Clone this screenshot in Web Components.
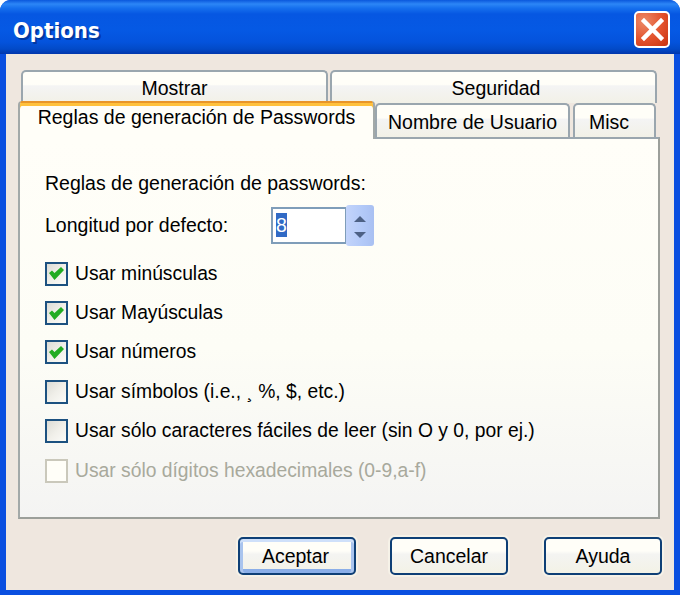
<!DOCTYPE html>
<html>
<head>
<meta charset="utf-8">
<title>Options</title>
<style>
    html, body { margin: 0; padding: 0; background: #fff; }
    body { font-family: "Liberation Sans", Arial, sans-serif; font-size: 19.5px; color: #000; }
</style>
</head>
<body>
<xp-window heading="Options">
    <xp-tabs>
        <xp-tab slot="top" style="width:307px">Mostrar</xp-tab>
        <xp-tab slot="top" style="width:327px;padding-left:5px">Seguridad</xp-tab>
        <xp-tab slot="bottom" active style="width:357px">Reglas de generación de Passwords</xp-tab>
        <xp-tab slot="bottom" style="width:195px;margin-right:3px">Nombre de Usuario</xp-tab>
        <xp-tab slot="bottom" style="width:83px;padding-right:11px">Misc</xp-tab>

        <div style="height:34px;display:flex;align-items:center">Reglas de generación de passwords:</div>
        <xp-spinner value="8">Longitud por defecto:</xp-spinner>
        <xp-checkbox checked>Usar minúsculas</xp-checkbox>
        <xp-checkbox checked>Usar Mayúsculas</xp-checkbox>
        <xp-checkbox checked>Usar números</xp-checkbox>
        <xp-checkbox>Usar símbolos (i.e., ¸ %, $, etc.)</xp-checkbox>
        <xp-checkbox>Usar sólo caracteres fáciles de leer (sin O y 0, por ej.)</xp-checkbox>
        <xp-checkbox disabled>Usar sólo dígitos hexadecimales (0-9,a-f)</xp-checkbox>
    </xp-tabs>
    <xp-button slot="actions" default style="margin-right:34px;padding-right:3px">Aceptar</xp-button>
    <xp-button slot="actions" style="margin-right:36px">Cancelar</xp-button>
    <xp-button slot="actions">Ayuda</xp-button>
</xp-window>

<script>
class XpWindow extends HTMLElement {
    constructor() {
        super()
        this.attachShadow({ mode: "open" })
        this.shadowRoot.innerHTML = `
            <style>
                :host {
                    display: flex;
                    flex-direction: column;
                    width: 680px;
                    height: 595px;
                    box-sizing: border-box;
                    overflow: hidden;
                    border-radius: 11px 11px 0 0;
                    background: #0a4fe0;
                }
                .title {
                    height: 54px;
                    flex: none;
                    box-sizing: border-box;
                    display: flex;
                    align-items: center;
                    justify-content: space-between;
                    padding: 4px 10px 0 13px;
                    background: linear-gradient(#0a58dc 0, #2c86f6 4px, #1670ee 8px, #0657e2 14px, #0559e4 30px, #0453dc 42px, #024ac8 49px, #0136ac 54px);
                }
                h1 {
                    margin: 2px 0 0;
                    font: bold 22px "DejaVu Sans Condensed", "DejaVu Sans", sans-serif;
                    color: #fff;
                    text-shadow: 2px 2px 0 #0238a0;
                }
                .close {
                    width: 36px;
                    height: 37px;
                    box-sizing: border-box;
                    border: 2px solid #fff;
                    border-radius: 5px;
                    background: radial-gradient(circle at 25% 25%, #ec8a68, #e2512c 55%, #c8330f);
                    display: flex;
                    align-items: center;
                    justify-content: center;
                }
                .frame {
                    flex: 1;
                    display: flex;
                    flex-direction: column;
                    margin: 0 6px 5px 6px;
                    background: #efe7df;
                    padding: 16px 0 0 12px;
                }
                .actions {
                    display: flex;
                    margin: 18px 12px 0 0;
                    justify-content: flex-end;
                }
            </style>
            <div class="title">
                <h1></h1>
                <div class="close">
                    <svg width="27" height="27" viewBox="0 0 27 27">
                        <path d="M5 5 L22 22 M22 5 L5 22" stroke="#fff" stroke-width="4.5" fill="none" stroke-linecap="square"/>
                    </svg>
                </div>
            </div>
            <div class="frame">
                <slot></slot>
                <div class="actions"><slot name="actions"></slot></div>
            </div>
        `
    }

    connectedCallback() {
        this.shadowRoot.querySelector("h1").textContent = this.getAttribute("heading")
    }
}

class XpTabs extends HTMLElement {
    constructor() {
        super()
        this.attachShadow({ mode: "open" })
        this.shadowRoot.innerHTML = `
            <style>
                :host { display: block; width: 642px; }
                .row { display: flex; }
                .top { padding-left: 3px; height: 33px; gap: 2px; }
                .bottom { height: 34px; align-items: flex-end; }
                .panel {
                    height: 382px;
                    box-sizing: border-box;
                    display: block;
                    padding: 27px 0 0 25px;
                    border: 2px solid #9c9f9a;
                    border-top-color: #9aa6ae;
                    border-left-color: #a3a9a8;
                    background: linear-gradient(#fffef8 0, #fdfdf6 55%, #f4f4f3 100%);
                }
            </style>
            <div class="row top"><slot name="top"></slot></div>
            <div class="row bottom"><slot name="bottom"></slot></div>
            <div class="panel"><slot></slot></div>
        `
    }
}

class XpTab extends HTMLElement {
    constructor() {
        super()
        this.attachShadow({ mode: "open" })
        this.shadowRoot.innerHTML = `
            <style>
                :host {
                    display: flex;
                    align-items: center;
                    justify-content: center;
                    box-sizing: border-box;
                    height: 34px;
                    padding-top: 2px;
                    border: 2px solid #9aa6ae;
                    border-bottom: 0;
                    border-radius: 5px 5px 0 0;
                    background: linear-gradient(#fffef8 0, #fffef8 40%, #f4f4f4 45%, #f2f1e7 100%);
                }
                :host([slot="top"]) { height: 33px; }
                :host([active]) {
                    position: relative;
                    z-index: 1;
                    height: 38px;
                    margin-bottom: -2px;
                    margin-top: -4px;
                    padding: 0 0 6px;
                    border: 2px solid #a3a9a8;
                    border-top: 0;
                    border-bottom: 0;
                    background: #fffef8;
                    box-shadow: inset 0 5px 0 #ffc13c;
                    border-radius: 4px 4px 0 0;
                    overflow: hidden;
                }
                :host([active])::before {
                    content: "";
                    position: absolute;
                    left: -2px; right: -2px; top: 0;
                    height: 2px;
                    background: #e8952a;
                }
            </style>
            <slot></slot>
        `
    }
}

class XpCheckbox extends HTMLElement {
    constructor() {
        super()
        this.attachShadow({ mode: "open" })
        this.shadowRoot.innerHTML = `
            <style>
                :host {
                    display: flex;
                    align-items: center;
                    gap: 7px;
                    height: 39.4px;
                    font-size: 19.3px;
                    white-space: nowrap;
                }
                :host([disabled]) { color: #a8a99c; }
                .box {
                    width: 23px;
                    height: 24px;
                    flex: none;
                    box-sizing: border-box;
                    border: 2px solid #1c5180;
                    background: linear-gradient(135deg, #dcdcd6 0, #f0efe9 50%, #fbfbf8 100%);
                    display: flex;
                    align-items: center;
                    justify-content: center;
                }
                :host([disabled]) .box { border-color: #cac8bb; background: #fffef8; }
                svg { display: none; }
                :host([checked]) svg { display: block; }
            </style>
            <span class="box">
                <svg width="15" height="13" viewBox="0 0 15 13">
                    <path d="M0 6 L3 3.5 L5.5 6 L12 0 L15 3 L5.5 13 Z" fill="#22ac22"/>
                </svg>
            </span>
            <span><slot></slot></span>
        `
    }
}

class XpSpinner extends HTMLElement {
    constructor() {
        super()
        this.attachShadow({ mode: "open" })
        this.shadowRoot.innerHTML = `
            <style>
                :host {
                    display: flex;
                    align-items: center;
                    height: 42px;
                    margin: 4px 0 8px;
                }
                .lbl { width: 226px; flex: none; }
                .field {
                    width: 75px;
                    height: 37px;
                    box-sizing: border-box;
                    border: 2px solid #7f9db9;
                    border-right-width: 1px;
                    background: #fff;
                    padding: 0 0 0 3px;
                    display: flex;
                    align-items: center;
                }
                .sel { background: #316ac5; color: #fff; width: 11px; height: 24px; line-height: 24px; text-align: center; }
                .spin {
                    width: 28px;
                    height: 41px;
                    box-sizing: border-box;
                    border-radius: 3px;
                    background: linear-gradient(90deg, #c3d4fb, #b2c9f8 60%, #a9c0f2);
                    display: flex;
                    flex-direction: column;
                    align-items: center;
                    justify-content: space-between;
                    padding: 10px 0 7px;
                }
            </style>
            <span class="lbl"><slot></slot></span>
            <span class="field"><span class="sel"></span></span>
            <span class="spin">
                <svg width="14" height="8" viewBox="0 0 14 8"><path d="M1 7 L7 1 L13 7 Z" fill="#4d6185"/></svg>
                <svg width="14" height="8" viewBox="0 0 14 8"><path d="M1 1 L7 7 L13 1 Z" fill="#4d6185"/></svg>
            </span>
        `
    }

    connectedCallback() {
        this.shadowRoot.querySelector(".sel").textContent = this.getAttribute("value")
    }
}

class XpButton extends HTMLElement {
    constructor() {
        super()
        this.attachShadow({ mode: "open" })
        this.shadowRoot.innerHTML = `
            <style>
                :host {
                    display: flex;
                    align-items: center;
                    justify-content: center;
                    width: 118px;
                    height: 38px;
                    box-sizing: border-box;
                    border: 2px solid #0e3f76;
                    border-radius: 5px;
                    background: linear-gradient(#fffef8 0, #fffef8 35%, #f4f4f2 45%, #f3f2e6 100%);
                    box-shadow: 0 0 0 2px #f6f2e8;
                }
                :host([default]) {
                    box-shadow: 0 0 0 2px #f6f2e8, inset 0 3px 0 #cfe0fa, inset 3px 0 0 #a9c4ee, inset -3px 0 0 #a9c4ee, inset 0 -4px 0 #8aaee8;
                }
            </style>
            <slot></slot>
        `
    }
}

customElements.define("xp-window", XpWindow)
customElements.define("xp-tabs", XpTabs)
customElements.define("xp-tab", XpTab)
customElements.define("xp-checkbox", XpCheckbox)
customElements.define("xp-spinner", XpSpinner)
customElements.define("xp-button", XpButton)
</script>
</body>
</html>
